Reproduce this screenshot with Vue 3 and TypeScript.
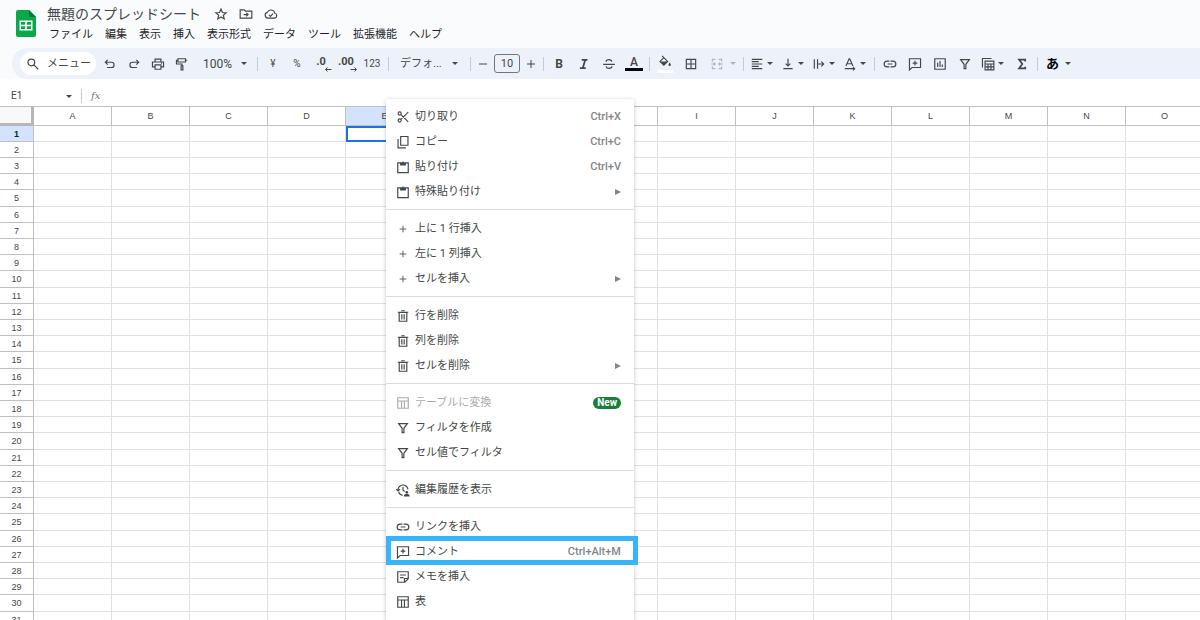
<script setup lang="ts">
import { ref } from 'vue'

interface MenuEntry {
  label: string
  icon: string
  shortcut?: string
  submenu?: boolean
  disabled?: boolean
  isNew?: boolean
  highlighted?: boolean
}

const menus = ['ファイル', '編集', '表示', '挿入', '表示形式', 'データ', 'ツール', '拡張機能', 'ヘルプ']
const columns = 'ABCDEFGHIJKLMNO'.split('')
const rowCount = 31
const activeColumn = 'E'
const activeRow = 1

const cellName = ref('E1')
const fontSize = ref('10')
const zoom = ref('100%')
const font = ref('デフォ...')

// Stroke outlines on a 24-unit grid
const icons: Record<string, string> = {
  star: 'M12 3.6l2.5 5.9 6.4.5-4.9 4.2 1.5 6.2L12 17.1l-5.5 3.3L8 14.2 3.1 10l6.4-.5z',
  move: 'M2 5h7l2 2h11v12H2zM8 13h7M12.5 10l3 3-3 3',
  cloud: 'M6.500 19a5 5 0 0 1-.8-9.800A6.700 6.700 0 0 1 18.500 10.800 4.200 4.200 0 0 1 18.500 19zM8.500 13.500l2.500 2.500 4.500-4.500',
  search: 'M15 9.500a5.800 5.800 0 1 1-11.600 0 5.800 5.800 0 0 1 11.600 0zM13.500 13.500l7.500 7.500',
  undo: 'M8 5L4 9l4 4M4 9h10.500a4.500 4.500 0 0 1 0 9H7',
  redo: 'M16 5l4 4-4 4M20 9H9.500a4.500 4.500 0 0 0 0 9H17',
  print: 'M7 8V3.500h10V8M7 17H2.500V8.500h19V17H17M7 13.500h10V21H7zM17.500 11h1.500',
  paint: 'M5 3h13v5.500H5zM5 5.500H2.500V12H12v3M10.500 15h3v7h-3zM18 5.500h3',
  minus: 'M4 12h16',
  plus: 'M4 12h16M12 4v16',
  italic: 'M8 5h10M5 19h10M14 5l-4 14',
  strike: 'M2 12.500h20M17 8c-.5-2.500-2.500-3.500-5-3.500S7 6 7 8M7 16c.5 2.500 2.500 3.500 5 3.500s5-1.300 5-3.500',
  borders: 'M4 4h16v16H4zM12 4v16M4 12h16',
  merge: 'M9 4H4v4M15 4h5v4M9 20H4v-4M15 20h5v-4M2 12h7M6.500 9.500L9 12l-2.500 2.500M22 12h-7M17.500 9.500L15 12l2.500 2.500',
  align: 'M3 4h18M3 8h12M3 12h18M3 16h12M3 20h18',
  valign: 'M12 3v12M8 11.500l4 4 4-4M4 20h16',
  wrap: 'M4 4v16M9.500 4v16M9 12h11M16 8l4 4-4 4',
  rotate: 'M5 15.500L10.500 3h1L17 15.500M7 11.500h8M3 20h17M17 17l3 3-3 3',
  link: 'M11 7H7a5 5 0 0 0 0 10h4M13 7h4a5 5 0 0 1 0 10h-4M8 12h8',
  comment: 'M2.500 3h19v15H7l-4.500 4zM12 6.500v8M8 10.500h8',
  chart: 'M3 3h18v18H3zM8 10v7M12 7v10M16 13v4',
  filter: 'M4.500 4.500h15l-6 8v7.500h-3v-7.500z',
  tableview: 'M7 7h15v15H7zM7 12h15M7 17h15M12 12v10M17 12v10M2.500 18V2.500H18',
  sum: 'M17.500 7.500V4.500H7L12.500 12 7 19.500h10.500v-3',
  cut: 'M9 6a2.700 2.700 0 1 1-5.400 0A2.700 2.700 0 0 1 9 6zM9 18a2.700 2.700 0 1 1-5.400 0A2.700 2.700 0 0 1 9 18zM8.500 8L21 20.500M8.500 16L21 3.500',
  copy: 'M8 2.500h12.500v15H8zM3.500 7v15H17',
  paste: 'M3 5h18v16.500H3zM8 4.500v4h8v-4M12 2.500v3M8 6.500h8',
  trash: 'M5.500 6h13v15h-13zM3 5.500h18M9 3h6M10 9v9M14 9v9',
  table: 'M3 3h18v18H3zM3 8.500h18M9.500 9v12M14.500 9v12',
  history: 'M3.500 13a8.500 8.500 0 0 1 17-2M4.500 15.500a8.500 8.500 0 0 0 7 5.500M0 10.500l3.500 3 3.500-3M12 7v5.500l3 2',
  note: 'M3 3h18v12l-6 6H3zM21 14.500h-6.500V21M7 8.500h10M7 13h6',
}

const headerTools = [
  { icon: 'star', label: 'スター' },
  { icon: 'move', label: '移動' },
  { icon: 'cloud', label: '保存状況' },
]
const historyTools = [
  { icon: 'undo', label: '元に戻す' },
  { icon: 'redo', label: 'やり直し' },
  { icon: 'print', label: '印刷' },
  { icon: 'paint', label: '書式を貼り付け' },
]
const alignTools = [
  { icon: 'align', label: '水平方向の配置' },
  { icon: 'valign', label: '垂直方向の配置' },
  { icon: 'wrap', label: 'テキストの折り返し' },
  { icon: 'rotate', label: 'テキストの回転' },
]
const insertTools = [
  { icon: 'link', label: 'リンクを挿入' },
  { icon: 'comment', label: 'コメントを挿入' },
  { icon: 'chart', label: 'グラフを挿入' },
  { icon: 'filter', label: 'フィルタを作成' },
]

const groups: MenuEntry[][] = [
  [
    { label: '切り取り', icon: 'cut', shortcut: 'Ctrl+X' },
    { label: 'コピー', icon: 'copy', shortcut: 'Ctrl+C' },
    { label: '貼り付け', icon: 'paste', shortcut: 'Ctrl+V' },
    { label: '特殊貼り付け', icon: 'paste', submenu: true },
  ],
  [
    { label: '上に 1 行挿入', icon: 'plus' },
    { label: '左に 1 列挿入', icon: 'plus' },
    { label: 'セルを挿入', icon: 'plus', submenu: true },
  ],
  [
    { label: '行を削除', icon: 'trash' },
    { label: '列を削除', icon: 'trash' },
    { label: 'セルを削除', icon: 'trash', submenu: true },
  ],
  [
    { label: 'テーブルに変換', icon: 'table', disabled: true, isNew: true },
    { label: 'フィルタを作成', icon: 'filter' },
    { label: 'セル値でフィルタ', icon: 'filter' },
  ],
  [{ label: '編集履歴を表示', icon: 'history' }],
  [
    { label: 'リンクを挿入', icon: 'link' },
    { label: 'コメント', icon: 'comment', shortcut: 'Ctrl+Alt+M', highlighted: true },
    { label: 'メモを挿入', icon: 'note' },
    { label: '表', icon: 'table' },
    { label: 'プルダウン', icon: 'valign' },
  ],
]
</script>

<template>
  <div class="app">
    <header class="header">
      <svg class="logo" viewBox="0 0 20 27" aria-hidden="true">
        <path d="M2 0h11l7 7v18a2 2 0 0 1-2 2H2a2 2 0 0 1-2-2V2a2 2 0 0 1 2-2z" fill="#0ba84a" />
        <path d="M13 0l7 7h-7z" fill="#087a38" />
        <path d="M3.500 10.500h13v10h-13zM5 12v2.700h4.200V12zM10.800 12v2.700H15V12zM5 16.300V19h4.200v-2.700zM10.800 16.300V19H15v-2.700z" fill="#fff" fill-rule="evenodd" />
      </svg>
      <div class="heading">
        <div class="title-row">
          <h1>無題のスプレッドシート</h1>
          <button v-for="t in headerTools" :key="t.icon" class="tool" :aria-label="t.label">
            <svg class="icon" viewBox="0 0 24 24"><path :d="icons[t.icon]" /></svg>
          </button>
        </div>
        <nav class="menubar">
          <button v-for="m in menus" :key="m">{{ m }}</button>
        </nav>
      </div>
    </header>

    <div class="band">
      <div class="toolbar" role="toolbar">
        <button class="search">
          <svg class="icon" viewBox="0 0 24 24"><path :d="icons.search" /></svg>
          <span>メニュー</span>
        </button>
        <div class="group history">
          <button v-for="t in historyTools" :key="t.icon" class="tool" :aria-label="t.label">
            <svg class="icon" viewBox="0 0 24 24"><path :d="icons[t.icon]" /></svg>
          </button>
        </div>
        <div class="picker zoom">
          <select v-model="zoom" aria-label="ズーム"><option>100%</option></select>
          <i class="caret"></i>
        </div>
        <i class="rule"></i>
        <div class="group">
          <button class="tool small">¥</button>
          <button class="tool small">%</button>
          <button class="tool decimal" aria-label="小数点以下の桁数を減らす">
            <span>.0</span>
            <svg class="arrow" viewBox="0 0 8 5"><path d="M7.500 2.500h-6M3.500 .5l-2 2 2 2" /></svg>
          </button>
          <button class="tool decimal two" aria-label="小数点以下の桁数を増やす">
            <span>.00</span>
            <svg class="arrow" viewBox="0 0 8 5"><path d="M.5 2.500h6M4.500 .5l2 2-2 2" /></svg>
          </button>
          <button class="tool small two">123</button>
        </div>
        <i class="rule"></i>
        <div class="picker font">
          <select v-model="font" aria-label="フォント"><option>デフォ...</option></select>
          <i class="caret"></i>
        </div>
        <i class="rule"></i>
        <div class="group stepper">
          <button class="tool step" aria-label="フォントサイズを縮小">
            <svg class="icon" viewBox="0 0 24 24"><path :d="icons.minus" /></svg>
          </button>
          <input v-model="fontSize" aria-label="フォントサイズ" />
          <button class="tool step" aria-label="フォントサイズを拡大">
            <svg class="icon" viewBox="0 0 24 24"><path :d="icons.plus" /></svg>
          </button>
        </div>
        <i class="rule"></i>
        <div class="group spaced">
          <button class="tool bold">B</button>
          <button class="tool" aria-label="斜体">
            <svg class="icon heavy" viewBox="0 0 24 24"><path :d="icons.italic" /></svg>
          </button>
          <button class="tool" aria-label="取り消し線">
            <svg class="icon" viewBox="0 0 24 24"><path :d="icons.strike" /></svg>
          </button>
          <button class="tool text-color"><span>A</span></button>
        </div>
        <i class="rule"></i>
        <div class="group wide">
          <button class="tool fill" aria-label="塗りつぶしの色">
            <svg class="icon" viewBox="0 0 24 24">
              <path d="M7 1.500l9.500 9.500L10 17.500 3.500 11 10 4.500" />
              <path class="solid" d="M4 11h12.500L10 17.500zM20 13c1.300 1.700 2 2.800 2 3.700a2 2 0 0 1-4 0c0-.9.7-2 2-3.700z" />
            </svg>
          </button>
          <button class="tool" aria-label="枠線">
            <svg class="icon" viewBox="0 0 24 24"><path :d="icons.borders" /></svg>
          </button>
          <button class="drop roomy" disabled aria-label="セルを結合">
            <svg class="icon" viewBox="0 0 24 24"><path :d="icons.merge" /></svg><i class="caret"></i>
          </button>
        </div>
        <i class="rule"></i>
        <div class="group">
          <button v-for="t in alignTools" :key="t.icon" class="drop" :aria-label="t.label">
            <svg class="icon" viewBox="0 0 24 24"><path :d="icons[t.icon]" /></svg><i class="caret"></i>
          </button>
        </div>
        <i class="rule"></i>
        <div class="group spaced">
          <button v-for="t in insertTools" :key="t.icon" class="tool" :aria-label="t.label">
            <svg class="icon" viewBox="0 0 24 24"><path :d="icons[t.icon]" /></svg>
          </button>
          <button class="drop" aria-label="フィルタ表示">
            <svg class="icon" viewBox="0 0 24 24"><path :d="icons.tableview" /></svg><i class="caret"></i>
          </button>
          <button class="tool" aria-label="関数">
            <svg class="icon heavy" viewBox="0 0 24 24"><path :d="icons.sum" /></svg>
          </button>
        </div>
        <i class="rule"></i>
        <button class="drop roomy kana"><span>あ</span><i class="caret"></i></button>
      </div>
    </div>

    <div class="formula">
      <input v-model="cellName" class="name-box" aria-label="名前ボックス" />
      <i class="caret"></i>
      <i class="rule"></i>
      <span class="fx">fx</span>
      <input class="formula-input" aria-label="数式" />
    </div>

    <main class="sheet">
      <table>
        <thead>
          <tr>
            <td class="corner"></td>
            <th v-for="c in columns" :key="c" scope="col" :class="{ selected: c === activeColumn }">{{ c }}</th>
          </tr>
        </thead>
        <tbody>
          <tr v-for="r in rowCount" :key="r">
            <th scope="row" :class="{ selected: r === activeRow }">{{ r }}</th>
            <td v-for="c in columns" :key="c" :class="{ active: r === activeRow && c === activeColumn }"></td>
          </tr>
        </tbody>
      </table>
    </main>

    <div class="context" role="menu">
      <div v-for="(g, i) in groups" :key="i" class="section">
        <button
          v-for="e in g"
          :key="e.label"
          class="entry"
          :class="{ highlighted: e.highlighted }"
          :disabled="e.disabled"
          role="menuitem"
        >
          <svg class="icon" :class="{ compact: e.icon === 'plus' }" viewBox="0 0 24 24">
            <path :d="icons[e.icon]" />
            <path v-if="e.icon === 'history'" class="solid" d="M18.500 13.500a2.500 2.500 0 1 1 0 5 2.500 2.500 0 0 1 0-5zM13.500 23c0-3 2-4 5-4s5 1 5 4z" />
          </svg>
          <span class="label">{{ e.label }}</span>
          <kbd v-if="e.shortcut">{{ e.shortcut }}</kbd>
          <i v-if="e.submenu" class="submenu"></i>
          <span v-if="e.isNew" class="badge">New</span>
        </button>
      </div>
    </div>
  </div>
</template>

<style>
body {
  margin: 0;
}
</style>

<style scoped>
.app {
  position: relative;
  display: flex;
  flex-direction: column;
  height: 100vh;
  overflow: hidden;
  background: #fff;
  color: #444746;
  font-family: Roboto, "Noto Sans CJK JP", sans-serif;
  font-size: 11px;
  line-height: 16px;
}
button,
input,
select {
  margin: 0;
  padding: 0;
  border: 0;
  background: none;
  color: inherit;
  font: inherit;
}
.icon {
  flex: none;
  width: 14px;
  height: 14px;
  overflow: visible;
  fill: none;
  stroke: currentColor;
  stroke-width: 2;
}
.icon.heavy {
  stroke-width: 3;
}
.solid {
  fill: currentColor;
  stroke: none;
}
.caret {
  flex: none;
  width: 0;
  border: 3px solid transparent;
  border-top-color: currentColor;
  border-bottom: 0;
}
.rule {
  flex: none;
  width: 1px;
  height: 14px;
  margin: 0 3px;
  background: #c7cbd1;
}
.header {
  display: flex;
  height: 48px;
  background: #f9fbfd;
}
.logo {
  width: 20px;
  height: 27px;
  margin: 10px 7px 0 16px;
}
.heading {
  padding-top: 4px;
}
.title-row {
  display: flex;
  align-items: center;
  height: 20px;
  padding-left: 4px;
}
h1 {
  margin: 0 7px 0 0;
  font-size: 14px;
  font-weight: 400;
  line-height: 20px;
}
.menubar {
  display: flex;
  height: 22px;
}
.menubar button {
  padding: 0 6px;
  color: #1f1f1f;
  white-space: nowrap;
}
.band {
  padding-left: 12px;
  background: #f9fbfd;
}
.toolbar {
  display: flex;
  align-items: center;
  height: 31px;
  padding-left: 8px;
  background: #edf2fa;
  border-radius: 16px 0 0 16px;
}
.search {
  display: flex;
  flex: none;
  align-items: center;
  gap: 7px;
  width: 76px;
  height: 23px;
  padding-left: 6px;
  border-radius: 12px;
  background: #fff;
  white-space: nowrap;
}
.group {
  display: flex;
  flex: none;
  align-items: center;
}
.history {
  margin-left: 2px;
}
.spaced {
  gap: 1px;
}
.wide,
.stepper {
  gap: 2px;
}
.tool {
  display: flex;
  flex: none;
  align-items: center;
  justify-content: center;
  width: 24px;
  height: 20px;
}
.title-row .tool {
  width: 25px;
}
.small {
  font-size: 10px;
}
.two {
  width: 26px;
}
.step {
  width: 18px;
}
.step .icon {
  width: 12px;
  height: 12px;
}
.decimal {
  position: relative;
  padding-bottom: 4px;
  font-weight: 700;
}
.arrow {
  position: absolute;
  right: 1px;
  bottom: 2px;
  width: 8px;
  height: 5px;
  fill: none;
  stroke: currentColor;
}
.stepper input {
  box-sizing: border-box;
  width: 26px;
  height: 19px;
  border: 1px solid #747775;
  border-radius: 3px;
  text-align: center;
}
.bold {
  font-size: 12px;
  font-weight: 700;
}
.text-color span {
  width: 18px;
  border-bottom: 3px solid #000;
  font-size: 12px;
  font-weight: 500;
  line-height: 12px;
}
.fill .icon {
  padding: 0 1px 1px;
  border-bottom: 3px solid #fff;
}
.drop {
  display: flex;
  flex: none;
  align-items: center;
  gap: 3px;
  width: 31px;
  height: 20px;
  padding-left: 3px;
}
.roomy {
  gap: 6px;
  width: 35px;
  padding-left: 5px;
}
.drop:disabled {
  color: #b0b4b9;
}
.kana {
  color: #000;
  font-size: 13px;
  font-weight: 700;
}
.kana .caret {
  color: #444746;
}
.picker {
  display: flex;
  flex: none;
  align-items: center;
}
.picker select {
  flex: 1;
  min-width: 0;
  appearance: none;
}
.zoom {
  width: 44px;
  padding: 0 7px 0 9px;
  font-size: 12px;
}
.font {
  width: 58px;
  padding: 0 9px 0 8px;
}
.formula {
  display: flex;
  align-items: center;
  height: 20px;
  padding-top: 7px;
  padding-left: 11px;
}
.name-box {
  width: 55px;
  font-size: 10px;
}
.formula .rule {
  margin: 0 9px;
}
.fx {
  color: #747775;
  font-family: "DejaVu Serif", serif;
  font-size: 10px;
  font-style: italic;
}
.formula-input {
  flex: 1;
}
.sheet {
  flex: 1;
  min-height: 0;
  overflow: hidden;
  border-top: 1px solid #c0c0c0;
}
table {
  table-layout: fixed;
  width: 0;
  border-spacing: 0;
  font-family: "Liberation Sans", Arial, sans-serif;
  font-size: 9px;
  line-height: 12px;
}
th,
td {
  box-sizing: border-box;
  width: 78px;
  height: 16px;
  padding: 0;
  border-right: 1px solid #e1e1e1;
  border-bottom: 1px solid #e1e1e1;
}
tbody tr:nth-child(5n) > * {
  height: 17px;
}
th {
  border-color: #c0c0c0;
  font-weight: 400;
}
thead th,
.corner {
  height: 19px;
}
tbody th,
.corner {
  width: 34px;
}
.corner {
  border-right: 3px solid #b7b7b7;
  border-bottom: 3px solid #b7b7b7;
  background: #f8f9fa;
}
.selected {
  background: #d3e3fd;
}
tbody .selected {
  color: #041e49;
  font-weight: 700;
}
.active {
  border: 1px solid #1a73e8;
  outline: 1px solid #1a73e8;
  outline-offset: -2px;
}
.context {
  position: absolute;
  top: 99px;
  left: 386px;
  box-sizing: border-box;
  width: 248px;
  padding: 5px 0;
  border-radius: 3px;
  background: #fff;
  box-shadow: 0 1px 4px rgba(60, 64, 67, 0.3);
}
.section + .section {
  padding-top: 6px;
  border-top: 1px solid #dadce0;
}
.section:not(:last-child) {
  padding-bottom: 5px;
}
.entry {
  position: relative;
  display: flex;
  align-items: center;
  width: 100%;
  height: 25px;
  padding: 0 13px 0 10px;
  text-align: left;
}
.entry:disabled {
  color: #aaadb0;
}
.entry .compact {
  width: 10px;
  height: 10px;
  padding: 2px;
}
.label {
  flex: 1;
  margin-left: 5px;
}
kbd {
  color: #80868b;
  font-family: inherit;
  font-weight: 500;
}
.submenu {
  border: 3px solid transparent;
  border-left: 6px solid #80868b;
  border-right: 0;
}
.badge {
  padding: 0 4px;
  border-radius: 6px;
  background: #188038;
  color: #fff;
  font-size: 10px;
  font-weight: 700;
  line-height: 12px;
}
.highlighted::after {
  position: absolute;
  inset: -3px -4px -1px 0;
  border: 5px solid #39b4f9;
  content: "";
}
</style>
